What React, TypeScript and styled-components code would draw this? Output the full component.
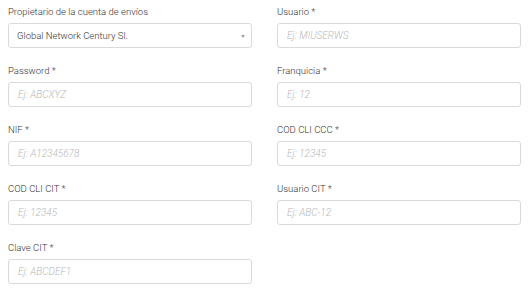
import React from 'react';
import styled, { createGlobalStyle } from 'styled-components';

const GlobalStyle = createGlobalStyle`
  body {
    margin: 0;
    background: #ffffff;
    font-family: Roboto, "Liberation Sans", sans-serif;
  }
`;

type FieldDef = {
  label: string;
  placeholder?: string;
  value?: string;
  select?: boolean;
};

const fields: FieldDef[] = [
  { label: 'Propietario de la cuenta de envíos', value: 'Global Network Century Sl.', select: true },
  { label: 'Usuario *', placeholder: 'Ej: MIUSERWS' },
  { label: 'Password *', placeholder: 'Ej: ABCXYZ' },
  { label: 'Franquicia *', placeholder: 'Ej: 12' },
  { label: 'NIF *', placeholder: 'Ej: A12345678' },
  { label: 'COD CLI CCC *', placeholder: 'Ej: 12345' },
  { label: 'COD CLI CIT *', placeholder: 'Ej: 12345' },
  { label: 'Usuario CIT *', placeholder: 'Ej: ABC-12' },
  { label: 'Clave CIT *', placeholder: 'Ej: ABCDEF1' },
];

export default function App() {
  return (
    <>
      <GlobalStyle />
      <Form>
        {fields.map((f) => (
          <Field key={f.label}>
            <Label>{f.label}</Label>
            {f.select ? (
              <SelectBox>
                <span>{f.value}</span>
                <Arrow />
              </SelectBox>
            ) : (
              <Input placeholder={f.placeholder} />
            )}
          </Field>
        ))}
      </Form>
    </>
  );
}

const Form = styled.div`
  display: grid;
  grid-template-columns: 244px 244px;
  column-gap: 25px;
  row-gap: 17px;
  padding: 6px 9px 0 8px;
`;

const Field = styled.div`
  display: flex;
  flex-direction: column;
`;

const Label = styled.label`
  font-size: 9.5px;
  font-weight: 300;
  line-height: 12px;
  color: #333;
  margin-bottom: 5px;
`;

const Input = styled.input`
  box-sizing: border-box;
  height: 25px;
  width: 100%;
  border: 1px solid #dadada;
  border-radius: 3px;
  padding: 0 9px;
  font-family: Roboto, "Liberation Sans", sans-serif;
  font-size: 10px;
  font-weight: 300;
  color: #333;
  outline: none;
  &::placeholder {
    color: #b8b8b8;
    font-style: italic;
  }
`;

const SelectBox = styled.div`
  box-sizing: border-box;
  height: 25px;
  border: 1px solid #dadada;
  border-radius: 3px;
  padding: 0 6px 0 8px;
  display: flex;
  align-items: center;
  justify-content: space-between;
  font-size: 9.5px;
  font-weight: 300;
  color: #333;
`;

const Arrow = styled.span`
  width: 0;
  height: 0;
  margin-top: 2px;
  border-left: 2.5px solid transparent;
  border-right: 2.5px solid transparent;
  border-top: 3px solid #a0a0a0;
`;
